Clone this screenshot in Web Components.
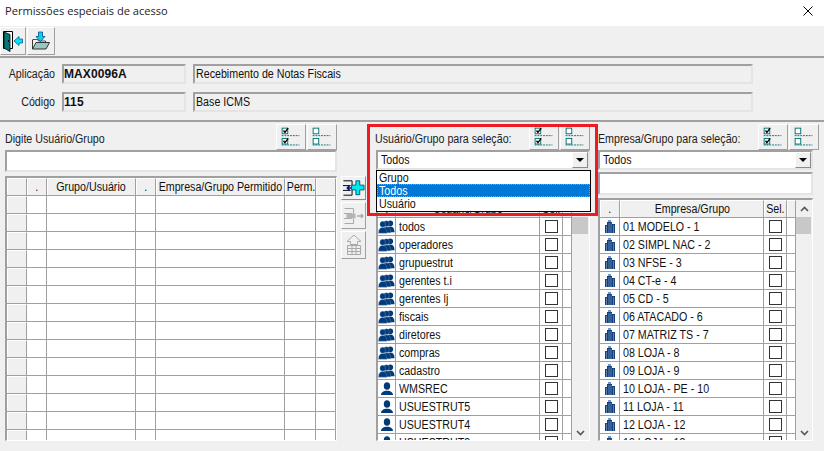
<!DOCTYPE html>
<html lang="pt">
<head>
<meta charset="utf-8">
<title>Permissões especiais de acesso</title>
<style>
  html, body { margin: 0; padding: 0; background: #f0f0f0; overflow: hidden; }
</style>
</head>
<body>
<perm-app></perm-app>
<script>
const FONT = `"Liberation Sans", Arial, sans-serif`

// the reference font is as tall as 12px Arial but about 11% narrower
const NARROW = `.t { display: inline-block; transform: scaleX(.89); transform-origin: var(--origin, left center); white-space: nowrap; }`

const ICONS = {
  group: `<svg width="18" height="14" viewBox="0 0 18 14"><g fill="#003a7a">
    <circle cx="13" cy="3" r="3"/><path d="M8.500 12.500c0-4 1.600-6 4.500-6s4.500 2 4.500 6z"/>
    <circle cx="9" cy="3.500" r="3" stroke="#7f9fc4" stroke-width=".4"/><path d="M4.500 13c0-4 1.600-6 4.500-6s4.500 2 4.500 6z" stroke="#7f9fc4" stroke-width=".4"/>
    <circle cx="5" cy="4" r="3" stroke="#7f9fc4" stroke-width=".4"/><path d="M.5 13.500c0-4 1.600-6 4.500-6s4.500 2 4.500 6z" stroke="#7f9fc4" stroke-width=".4"/></g></svg>`,
  user: `<svg width="14" height="14" viewBox="0 0 14 14"><g fill="#003a7a">
    <ellipse cx="7" cy="4" rx="3.200" ry="3.800"/><path d="M1 13c0-2.500 2-3.500 4.500-4.200h3c2.500.7 4.500 1.700 4.500 4.200z"/></g></svg>`,
  building: `<svg width="10" height="13" viewBox="0 0 10 13"><path fill="#6f9bcc" d="M3 0h3v2H3z"/><path fill="#163f7a" d="M0 5h2V2h5v2h3v9H0z"/>
    <path stroke="#8fb0d6" stroke-width=".6" d="M1.500 6v7M4 3v10M6 3v10M8.500 5v8" fill="none"/></svg>`,
  exit: `<svg width="22" height="22" viewBox="0 0 22 22"><path fill="#fff" stroke="#000" d="M1.500 1.500h9v17h-9z"/><path fill="#007a78" stroke="#000" stroke-width=".8" d="M2 2l6 2.500v17L2 18z"/><rect x="6" y="10" width="1" height="2" fill="#000"/>
    <path fill="#00e5ff" stroke="#0a5a8a" stroke-width=".8" d="M12 11l5-4.500v2.500h3.500v4H17v2.500z"/></svg>`,
  open: `<svg width="20" height="20" viewBox="0 0 20 20"><path fill="#fff" stroke="#222" stroke-width=".8" d="M1.500 8.500h5l1 1.500h7v2"/>
    <path fill="#9cc6c4" stroke="#222" stroke-width=".9" d="M1.500 9v9h13.500l3.500-6.500H5L1.500 18"/>
    <path fill="#00d5ee" stroke="#0a4a8a" stroke-width=".8" d="M7.500 1h4v4.500H14l-4.500 5-4.500-5h2.500z"/></svg>`,
  add: `<svg width="24" height="18" viewBox="0 0 24 18"><path fill="none" stroke="#000" d="M1.500 1.500h9M1.500 16.500h9M10.500 1.500v5M10.500 11v5.500M1 6.500h8M1 11.500h8"/>
    <path fill="none" stroke="#000c8a" stroke-width="1.500" d="M5 9h8M8 6.500L5.500 9 8 11.500"/>
    <path fill="#00e8f0" stroke="#075a70" d="M14.500 1.500h4v4.500H23v5h-4.500v5h-4v-5H10V6h4.500z"/></svg>`,
  remove: `<svg width="22" height="18" viewBox="0 0 22 18"><path fill="none" stroke="#a8a8a8" d="M1.500 1.500h9v5M1.500 16.500h9V12M1 6.500h8M1 11.500h8"/>
    <rect x="3.500" y="6.500" width="9" height="5" fill="#b4b4b4"/><path fill="none" stroke="#a8a8a8" stroke-width="1.300" d="M14 9h6M18 7l2 2-2 2"/></svg>`,
  upload: `<svg width="20" height="22" viewBox="0 0 20 22"><path fill="#f0f0f0" stroke="#a8a8a8" d="M10 1L3 7.500h3.500v3h7v-3H17z"/>
    <path fill="none" stroke="#a8a8a8" d="M3.500 11.500h13v9h-13zM3.500 14.500h13M3.500 17.500h13M8 11.500v9M12 11.500v9"/></svg>`,
  all: `<svg width="30" height="25" viewBox="0 0 30 25"><g fill="#fff" stroke="#007070"><rect x="5.500" y="2.500" width="6" height="6"/><rect x="5.500" y="13.500" width="6" height="6"/></g>
    <path fill="none" stroke="#000" stroke-width="1.500" d="M7 5l1.500 2L12 2.500M7 16l1.500 2L12 13.500"/>
    <path stroke="#007070" stroke-dasharray="2 1" d="M5 10.500h19M5 20.500h19"/></svg>`,
  none: `<svg width="30" height="25" viewBox="0 0 30 25"><g fill="#fff" stroke="#007070"><rect x="5.500" y="2.500" width="6" height="6"/><rect x="5.500" y="13.500" width="6" height="6"/></g>
    <path stroke="#007070" stroke-dasharray="2 1" d="M5 10.500h19M5 20.500h19"/></svg>`,
}

class TitleBar extends HTMLElement {
  constructor() {
    super()
    this.attachShadow({ mode: 'open' }).innerHTML = `
      <style>
        :host { display: flex; align-items: center; justify-content: space-between; height: 26px;
          background: #fff; padding: 0 11px 5px 5px; box-sizing: border-box;
          font: 11.100px "Open Sans", ${FONT}; color: #222; }
      </style>
      <slot></slot>
      <svg width="10" height="10" viewBox="0 0 10 10"><path stroke="#000" d="M.5.5l9 9M9.500.5l-9 9"/></svg>`
  }
}

class ToolBtn extends HTMLElement {
  constructor() {
    super()
    this.attachShadow({ mode: 'open' }).innerHTML = `
      <style>
        :host { display: flex; align-items: center; justify-content: center; box-sizing: border-box;
          width: var(--w, 26px); height: var(--h, 28px); background: #f0f0f0;
          border: 1px solid; border-color: #fff #a0a0a0 #a0a0a0 #fff; }
        :host([flat]) { border-color: #fff #8a8a8a #8a8a8a #fff; }
        svg { display: block; }
      </style>
      ${ICONS[this.getAttribute('icon')]}`
  }
}

class SunkenField extends HTMLElement {
  constructor() {
    super()
    this.attachShadow({ mode: 'open' }).innerHTML = `
      <style>
        ${NARROW}
        :host { display: flex; align-items: center; box-sizing: border-box; height: 20px; padding: 0 1px;
          background: var(--fill, #f0f0f0); border: 2px solid; border-color: #a0a0a0 #e4e4e4 #e4e4e4 #a0a0a0;
          font: 12px ${FONT}; color: #111; white-space: nowrap; overflow: hidden; }
        :host([strong]) { font-weight: bold; letter-spacing: .1px; padding: 0; }
        :host([strong]) .t { transform: none; }
      </style>
      <span class="t"><slot></slot></span>`
  }
}

class InfoRow extends HTMLElement {
  constructor() {
    super()
    this.attachShadow({ mode: 'open' }).innerHTML = `
      <style>
        ${NARROW}
        :host { display: grid; grid-template-columns: 55px 124px 560px; column-gap: 7px; align-items: center;
          font: 12px ${FONT}; color: #222; --origin: right center; }
        .label { text-align: right; }
        ::slotted(*) { min-width: 0; --origin: left center; }
      </style>
      <div class="label"><span class="t">${this.getAttribute('label')}</span></div>
      <slot></slot>`
  }
}

class ComboBox extends HTMLElement {
  constructor() {
    super()
    this.attachShadow({ mode: 'open' }).innerHTML = `
      <style>
        ${NARROW}
        :host { display: flex; align-items: center; justify-content: space-between; box-sizing: border-box; height: 20px;
          background: #fff; border: 2px solid; border-color: #a0a0a0 #e4e4e4 #e4e4e4 #a0a0a0;
          padding-left: 3px; font: 12px ${FONT}; color: #111; }
        .arrow { width: 16px; height: 16px; box-sizing: border-box; background: #f0f0f0; display: flex; align-items: center; justify-content: center;
          border: 1px solid; border-color: #fff #8a8a8a #8a8a8a #fff; }
        .arrow i { border: 4px solid transparent; border-top: 4px solid #000; border-bottom: 0; }
      </style>
      <span class="t"><slot></slot></span>
      <div class="arrow"><i></i></div>`
  }
}

class DropList extends HTMLElement {
  constructor() {
    super()
    const items = JSON.parse(this.getAttribute('items'))
    const current = this.getAttribute('current')
    this.attachShadow({ mode: 'open' }).innerHTML = `
      <style>
        ${NARROW}
        :host { display: block; position: absolute; box-sizing: border-box; background: #fff;
          border: 1px solid #000; font: 12px ${FONT}; color: #111; }
        div { height: 13px; line-height: 14px; padding-left: 2px; box-sizing: border-box; }
        .on { background: #0078d7; color: #fff; outline: 1px dotted #f08a1c; outline-offset: -1px; }
      </style>
      ${items.map((i) => `<div class="${i === current ? 'on' : ''}"><span class="t">${i}</span></div>`).join('')}`
  }
}

class DataGrid extends HTMLElement {
  set config({ columns, head, rows, scroll }) {
    const tpl = columns.map((c) => `${c}px`).join(' ')
    const body = rows
      ? rows.map((r) => `
          <div class="row">
            <div class="cell icon">${ICONS[r.icon]}</div>
            <div class="cell txt"><span class="t">${r.text}</span></div>
            <div class="cell chk"><i></i></div>
            <div class="cell"></div>
          </div>`).join('')
      : Array.from({ length: 14 }, () => `
          <div class="row">${columns.map((c, i) => `<div class="cell ${i === 0 ? 'ind' : ''}"></div>`).join('')}</div>`).join('')

    this.shadowRoot.innerHTML = `
      <style>
        ${NARROW}
        :host { display: flex; box-sizing: border-box; overflow: hidden; background: #f0f0f0;
          border: 1px solid; border-color: #a0a0a0 #fff #fff #a0a0a0; border-width: 2px 1px 1px 2px;
          font: 12px ${FONT}; color: #111; }
        .table { width: ${columns.reduce((a, b) => a + b, 0)}px; flex: none; overflow: hidden; }
        .row { display: grid; grid-template-columns: ${tpl}; height: 18px; box-sizing: border-box;
          border-bottom: 1px solid #a0a0a0; background: #fff; }
        .head { background: #f0f0f0; --origin: center; }
        .cell { border-right: 1px solid #a0a0a0; box-sizing: border-box; display: flex; align-items: center; overflow: hidden; white-space: nowrap; min-width: 0; }
        .head .cell { justify-content: center; border-left: 1px solid #fff; border-top: 1px solid #fff; }
        .ind { background: #f0f0f0; border-left: 1px solid #fff; border-top: 1px solid #fff; }
        .icon { justify-content: center; }
        .txt { padding-left: 3px; }
        .chk { justify-content: center; padding-left: 1px; }
        .chk i { display: block; width: 13px; height: 13px; box-sizing: border-box; border: 1px solid #333; background: #fff; }
        .bar { flex: 1; position: relative; background: #f0f0f0; display: ${scroll ? 'block' : 'none'}; min-width: 0; }
        .thumb { height: 17px; margin-top: 17px; background: #c8c8c8; margin-right: 1px; }
        .bar svg { position: absolute; left: 4px; }
        .up { top: 6px; } .down { bottom: 4px; }
      </style>
      <div class="table">
        <div class="row head">${head.map((h) => `<div class="cell"><span class="t">${h}</span></div>`).join('')}</div>
        ${body}
      </div>
      <div class="bar">
        <svg class="up" width="9" height="6" viewBox="0 0 9 6"><path d="M1 5l3.500-3.500L8 5" fill="none" stroke="#555" stroke-width="1.600"/></svg>
        <div class="thumb"></div>
        <svg class="down" width="9" height="6" viewBox="0 0 9 6"><path d="M1 1l3.500 3.500L8 1" fill="none" stroke="#555" stroke-width="1.600"/></svg>
      </div>`
  }
  constructor() {
    super()
    this.attachShadow({ mode: 'open' })
  }
}

class SelectPanel extends HTMLElement {
  constructor() {
    super()
    this.attachShadow({ mode: 'open' }).innerHTML = `
      <style>
        ${NARROW}
        :host { display: flex; flex-direction: column; height: 317px; font: 12px ${FONT}; color: #222; position: relative; }
        .head { display: flex; align-items: center; height: 26px; flex: none; }
        .label { flex: 1; padding-top: 4px; white-space: nowrap; margin-left: var(--label-x, 0); }
        .btns { display: flex; gap: 1px; }
        tool-btn { --w: 30px; --h: 26px; }
        ::slotted([slot=combo]) { margin-bottom: 2px; }
        ::slotted([slot=search]) { --fill: #fff; height: 23px; margin-bottom: 3px; }
        ::slotted([slot=grid]) { flex: 1; min-height: 0; }
      </style>
      <div class="head">
        <div class="label"><span class="t">${this.getAttribute('label')}</span></div>
        <div class="btns"><tool-btn icon="all"></tool-btn><tool-btn icon="none"></tool-btn></div>
      </div>
      <slot name="combo"></slot>
      <slot name="search"></slot>
      <slot name="grid"></slot>
      <slot></slot>`
  }
}

class PermApp extends HTMLElement {
  constructor() {
    super()
    this.attachShadow({ mode: 'open' }).innerHTML = `
      <style>
        :host { display: block; position: relative; width: 824px; height: 451px; overflow: hidden; background: #f0f0f0; }
        .tools { display: flex; gap: 1px; height: 30px; box-sizing: border-box; padding-top: 1px; }
        .rule { height: 2px; background: #a0a0a0; }
        .info { display: flex; flex-direction: column; gap: 8px; height: 62px; box-sizing: border-box; padding-top: 6px; }
        .main { display: grid; grid-template-columns: 332px 29px 224px 223px; padding: 2px 0 0 5px; }
        .side { display: flex; flex-direction: column; gap: 2px; padding-top: 52px; margin-left: 4px; }
        .side tool-btn { --w: 25px; }
        .center { margin-left: 10px; --label-x: -1px; }
        .right { margin-left: 8px; }
        .mark { position: absolute; left: 367px; top: 124px; width: 231px; height: 92px; box-sizing: border-box; border: 3px solid #ed1c24; pointer-events: none; }
        drop-list { left: 376px; top: 170px; width: 215px; height: 42px; }
      </style>
      <title-bar>Permissões especiais de acesso</title-bar>
      <div class="tools">
        <tool-btn icon="exit"></tool-btn>
        <tool-btn icon="open" style="--w:28px"></tool-btn>
      </div>
      <div class="rule"></div>
      <div class="info">
        <info-row label="Aplicação">
          <sunken-field strong>MAX0096A</sunken-field>
          <sunken-field>Recebimento de Notas Fiscais</sunken-field>
        </info-row>
        <info-row label="Código">
          <sunken-field strong>115</sunken-field>
          <sunken-field>Base ICMS</sunken-field>
        </info-row>
      </div>
      <div class="rule"></div>
      <div class="main">
        <select-panel label="Digite Usuário/Grupo">
          <sunken-field slot="search" style="height:22px;margin-bottom:4px"></sunken-field>
          <data-grid slot="grid" id="perm"></data-grid>
        </select-panel>
        <div class="side">
          <tool-btn icon="add" flat style="--h:24px"></tool-btn>
          <tool-btn icon="remove" style="--h:27px"></tool-btn>
          <tool-btn icon="upload" style="--h:28px"></tool-btn>
        </div>
        <select-panel class="center" label="Usuário/Grupo para seleção:">
          <combo-box slot="combo">Todos</combo-box>
          <sunken-field slot="search"></sunken-field>
          <data-grid slot="grid" id="users"></data-grid>
        </select-panel>
        <select-panel class="right" label="Empresa/Grupo para seleção:">
          <combo-box slot="combo">Todos</combo-box>
          <sunken-field slot="search"></sunken-field>
          <data-grid slot="grid" id="companies"></data-grid>
        </select-panel>
      </div>
      <div class="mark"></div>
      <drop-list items='["Grupo","Todos","Usuário"]' current="Todos"></drop-list>`

    const $ = (id) => this.shadowRoot.getElementById(id)

    $('perm').config = {
      columns: [20, 20, 89, 20, 129, 31, 20],
      head: ['', '.', 'Grupo/Usuário', '.', 'Empresa/Grupo Permitido', 'Perm.', ''],
    }

    const groups = ['todos', 'operadores', 'grupuestrut', 'gerentes t.i', 'gerentes lj', 'fiscais', 'diretores', 'compras', 'cadastro']
    const users = ['WMSREC', 'USUESTRUT5', 'USUESTRUT4', 'USUESTRUT3']
    $('users').config = {
      columns: [18, 144, 23, 9],
      head: ['.', 'Usuário/Grupo', 'Sel.', ''],
      rows: [
        ...groups.map((text) => ({ icon: 'group', text })),
        ...users.map((text) => ({ icon: 'user', text })),
      ],
      scroll: true,
    }

    const companies = ['01 MODELO - 1', '02 SIMPL NAC - 2', '03 NFSE - 3', '04 CT-e - 4', '05 CD - 5', '06 ATACADO - 6', '07 MATRIZ TS - 7',
      '08 LOJA - 8', '09 LOJA - 9', '10 LOJA - PE - 10', '11 LOJA - 11', '12 LOJA - 12', '13 LOJA - 13']
    $('companies').config = {
      columns: [20, 144, 23, 9],
      head: ['.', 'Empresa/Grupo', 'Sel.', ''],
      rows: companies.map((text) => ({ icon: 'building', text })),
      scroll: true,
    }
  }
}

customElements.define('title-bar', TitleBar)
customElements.define('tool-btn', ToolBtn)
customElements.define('sunken-field', SunkenField)
customElements.define('info-row', InfoRow)
customElements.define('combo-box', ComboBox)
customElements.define('drop-list', DropList)
customElements.define('data-grid', DataGrid)
customElements.define('select-panel', SelectPanel)
customElements.define('perm-app', PermApp)
</script>
</body>
</html>
